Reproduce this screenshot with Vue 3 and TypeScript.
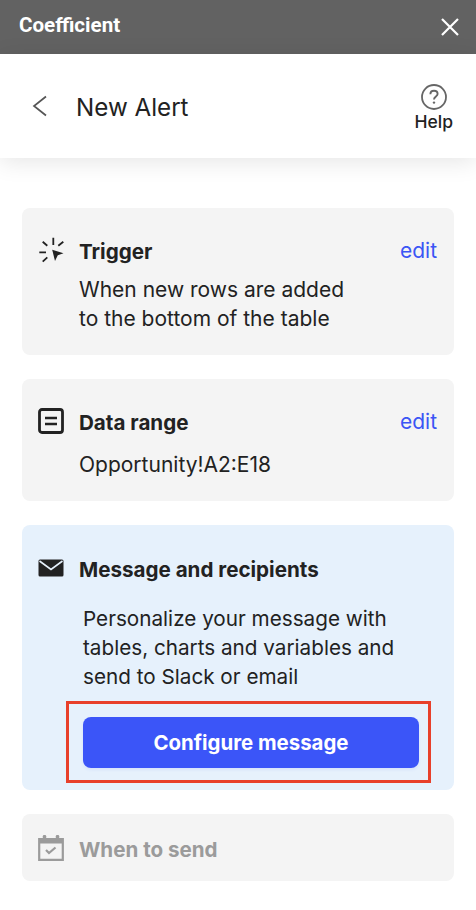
<script setup lang="ts">
const title = 'New Alert'
</script>

<template>
  <div class="page">
    <div class="titlebar">
      <span class="brand">Coefficient</span>
      <svg class="close" width="20" height="20" viewBox="0 0 20 20"><path d="M2 2L18 18M18 2L2 18" stroke="#fff" stroke-width="2.2" fill="none"/></svg>
    </div>
    <header class="head">
      <svg class="back" width="16" height="22" viewBox="0 0 16 22"><path d="M14 1.5L2 11L14 20.5" stroke="#555" stroke-width="1.7" fill="none"/></svg>
      <h1 class="title">{{ title }}</h1>
      <div class="help">
        <svg width="28" height="28" viewBox="0 0 28 28">
          <circle cx="14" cy="14" r="12" stroke="#666" stroke-width="1.8" fill="none"/>
          <path d="M10.4 11.2C10.4 9 12 7.8 14 7.8C16 7.8 17.6 9 17.6 11C17.6 13.4 14 13.6 14 16.4" stroke="#666" stroke-width="1.9" fill="none"/>
          <circle cx="14" cy="19.6" r="1.2" fill="#666"/>
        </svg>
        <span>Help</span>
      </div>
    </header>
    <main class="cards">
      <section class="card trigger">
        <div class="row">
          <svg class="ico" width="26" height="26" viewBox="0 0 26 26">
            <path d="M15.3 0.7V8M4.7 4.7L9.3 8.7M25.3 4.7L20.3 8.7M1.3 15.3H8M4.7 24.7L9.3 20.3" stroke="#222" stroke-width="1.8" fill="none"/>
            <path d="M14.2 12.8L25.5 16.3L19.8 18.2L17 24Z" fill="#222"/>
          </svg>
          <h2>Trigger</h2>
          <a class="edit">edit</a>
        </div>
        <p class="body">When new rows are added<br>to the bottom of the table</p>
      </section>
      <section class="card range">
        <div class="row">
          <svg class="ico" width="26" height="26" viewBox="0 0 26 26">
            <rect x="1.5" y="1.5" width="23" height="23" rx="2.5" stroke="#222" stroke-width="2.8" fill="none"/>
            <path d="M7 10H19M7 16H19" stroke="#222" stroke-width="2.6"/>
          </svg>
          <h2>Data range</h2>
          <a class="edit">edit</a>
        </div>
        <p class="body">Opportunity!A2:E18</p>
      </section>
      <section class="card message">
        <div class="row">
          <svg class="ico" width="26" height="18" viewBox="0 0 26 18">
            <rect x="0.5" y="0.5" width="25" height="17" rx="1.5" fill="#222"/>
            <path d="M1.5 2L13 10.5L24.5 2" stroke="#e6f1fc" stroke-width="1.6" fill="none"/>
          </svg>
          <h2>Message and recipients</h2>
        </div>
        <p class="desc">Personalize your message with<br>tables, charts and variables and<br>send to Slack or email</p>
        <div class="highlight">
          <button class="cta" type="button">Configure message</button>
        </div>
      </section>
      <section class="card when">
        <div class="row">
          <svg class="ico" width="26" height="26" viewBox="0 0 26 26">
            <path d="M1.2 4H24.8V24.8H1.2Z" stroke="#9b9b9b" stroke-width="2.2" fill="none"/>
            <path d="M1 3.5H25V8.5H1Z" fill="#9b9b9b"/>
            <rect x="4.8" y="0" width="3.4" height="5" rx="1.2" fill="#9b9b9b"/>
            <rect x="17.8" y="0" width="3.4" height="5" rx="1.2" fill="#9b9b9b"/>
            <path d="M8 15L11 18L17.5 12.5" stroke="#9b9b9b" stroke-width="2.2" fill="none"/>
          </svg>
          <h2>When to send</h2>
        </div>
      </section>
    </main>
  </div>
</template>

<style>
html, body { margin: 0; background: #fff; }
</style>

<style scoped>
.page {
  width: 476px;
  height: 910px;
  overflow: hidden;
  background: #fff;
  font-family: Inter, "Open Sans", sans-serif;
  color: #222;
}
.titlebar {
  height: 54px;
  background: #626262;
  display: flex;
  align-items: center;
  justify-content: space-between;
  padding: 0 16px 0 19px;
}
.brand {
  font-family: Roboto, sans-serif;
  font-weight: 700;
  font-size: 20.6px;
  color: #fff;
  position: relative;
  top: -2px;
}
.head {
  height: 104px;
  box-shadow: 0 4px 22px rgba(0, 0, 0, 0.1);
  display: flex;
  align-items: center;
  padding: 0 23px 0 32px;
}
.back { width: 16px; }
.title {
  margin: 0 0 0 28px;
  font-size: 24.2px;
  font-weight: 400;
  flex: 1;
  position: relative;
  top: 1px;
}
.help {
  display: flex;
  flex-direction: column;
  align-items: center;
  font-size: 17.5px;
  font-weight: 500;
  gap: 0;
  padding-top: 2px;
}
.cards {
  padding: 50px 22px 0;
  display: flex;
  flex-direction: column;
  gap: 24px;
}
.card {
  background: #f4f4f4;
  border-radius: 8px;
  box-sizing: border-box;
}
.trigger { height: 147px; padding: 29px 16px 0 16px; }
.range { height: 122px; padding: 29px 16px 0 16px; }
.message {
  height: 265px;
  background: #e6f1fc;
  padding: 30px 16px 0 16px;
}
.when { height: 67px; padding: 21px 16px 0 16px; color: #9b9b9b; }
.row {
  display: flex;
  align-items: center;
  height: 26px;
}
.ico { width: 26px; flex: none; }
h2 {
  margin: 2px 0 0 15px;
  font-size: 20.6px;
  font-weight: 700;
  flex: 1;
}
.edit {
  color: #3b55f5;
  font-size: 21px;
  margin-right: 1px;
}
.body {
  margin: 12px 0 0 41px;
  font-size: 21px;
  line-height: 29px;
}
.range .body { margin-top: 16px; }
.desc {
  margin: 23px 0 0 45px;
  font-size: 20.7px;
  line-height: 29px;
}
.highlight {
  margin: 10px 0 0 28px;
  width: 365px;
  height: 82px;
  box-sizing: border-box;
  border: 3px solid #e8402a;
  padding: 13px 9px 0 14px;
}
.cta {
  display: block;
  width: 336px;
  height: 51px;
  border: 0;
  border-radius: 8px;
  background: #3b55f8;
  color: #fff;
  font-family: inherit;
  font-size: 20.4px;
  font-weight: 700;
  box-shadow: 0 2px 3px rgba(59, 85, 248, 0.08);
}
</style>
